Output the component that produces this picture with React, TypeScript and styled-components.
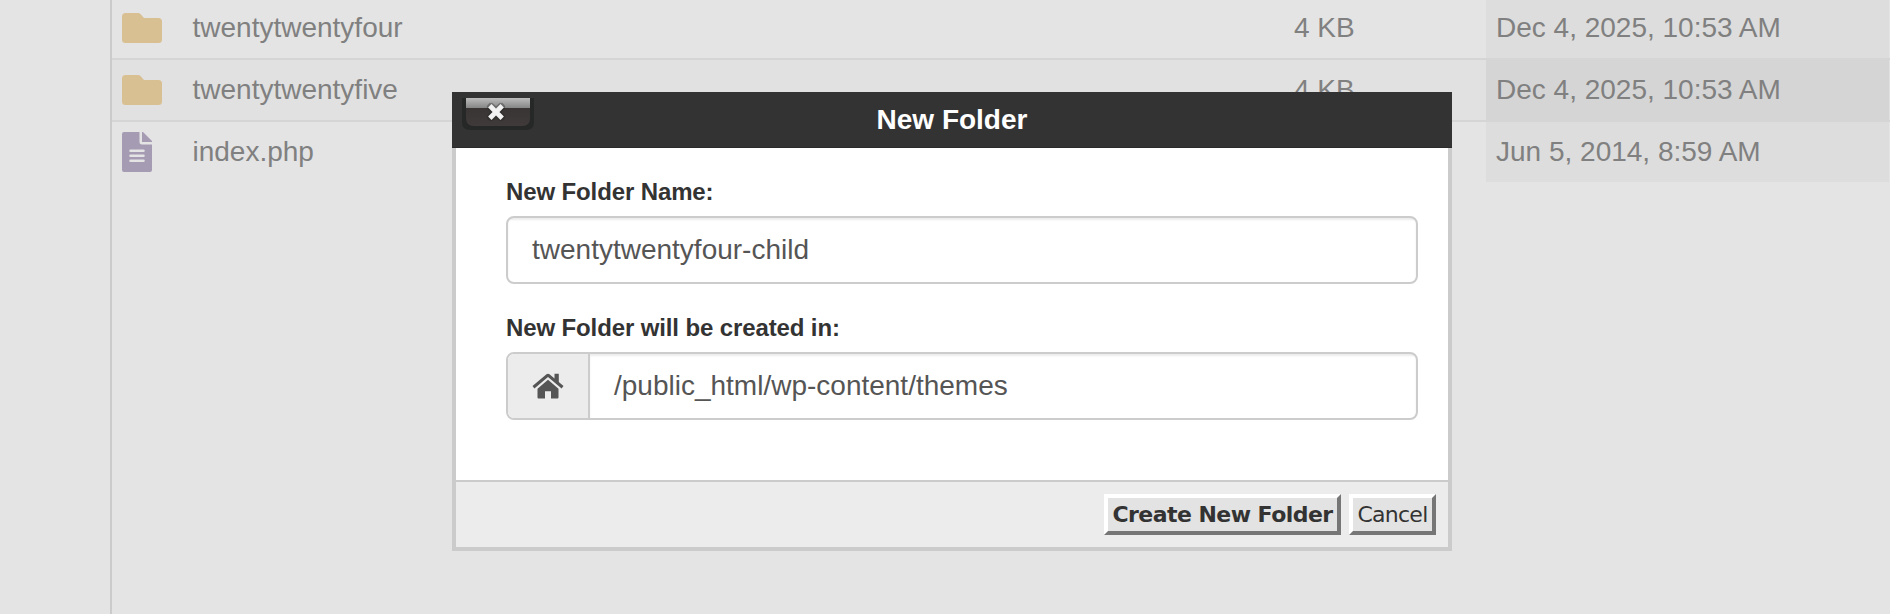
import React from "react";
import styled, { createGlobalStyle } from "styled-components";

const Global = createGlobalStyle`
  * { box-sizing: border-box; }
  body { margin: 0; background: #e4e4e4; overflow: hidden; font-family: "Liberation Sans", Arial, sans-serif; }
`;
const Page = styled.div`
  position: relative;
  display: flex;
  height: 614px;
  overflow: hidden;
`;
const Sidebar = styled.aside`
  width: 112px;
  flex: none;
  border-right: 2px solid #cbcbcb;
`;
const FileList = styled.main`
  flex: 1;
`;
const Row = styled.div<{ $alt?: boolean; $first?: boolean; $last?: boolean }>`
  display: grid;
  grid-template-columns: 80.5px 1101.5px 192px 403px;
  height: ${(p) => (p.$first ? 60 : p.$last ? 60 : 62)}px;
  border-bottom: ${(p) => (p.$last ? 0 : 2)}px solid #d5d5d5;
  background: ${(p) => (p.$alt ? "#e1e1e1" : "#e4e4e4")};
  font-size: 28px;
  line-height: 32px;
  color: #808080;
`;
const IconCell = styled.div<{ $top: number }>`
  padding: ${(p) => p.$top}px 0 0 10px;
  svg { display: block; }
`;
const Cell = styled.div<{ $top: number }>`
  padding-top: ${(p) => p.$top}px;
  white-space: nowrap;
`;
const DateCell = styled(Cell)<{ $alt?: boolean }>`
  padding-left: 10px;
  background: ${(p) => (p.$alt ? "#d5d5d5" : "#dddddd")};
`;

const Dialog = styled.section`
  position: absolute;
  left: 452px;
  top: 92px;
  width: 1000px;
  height: 459px;
  display: flex;
  flex-direction: column;
  background: #fff;
`;
const Header = styled.header`
  position: relative;
  height: 56px;
  flex: none;
  background: #333;
  border-bottom: 1px solid #2b2b2b;
  color: #fff;
  font-weight: bold;
  font-size: 28px;
  line-height: 56px;
  text-align: center;
`;
const CloseButton = styled.button`
  position: absolute;
  left: 10px;
  top: 6px;
  width: 72px;
  height: 32px;
  padding: 0;
  border: 0;
  background: none;
  svg { display: block; }
`;
const Body = styled.div`
  flex: 1;
  padding: 30px 30px 0 50px;
  border: solid #cbcbcb;
  border-width: 0 4px;
`;
const Label = styled.label`
  display: block;
  height: 38px;
  color: #333;
  font-weight: bold;
  font-size: 24px;
  line-height: 28px;
  letter-spacing: -0.12px;
  white-space: nowrap;
`;
const Field = styled.div`
  display: flex;
  height: 68px;
  margin-bottom: 30px;
  border: 2px solid #ccc;
  border-radius: 8px;
  overflow: hidden;
`;
const Addon = styled.span`
  display: flex;
  align-items: center;
  justify-content: center;
  width: 82px;
  flex: none;
  background: #ececec;
  border-right: 2px solid #ccc;
`;
const Value = styled.div`
  flex: 1;
  padding-left: 24px;
  box-shadow: inset 0 2px 2px rgba(0, 0, 0, 0.075);
  font-size: 28px;
  line-height: 64px;
  color: #555;
`;
const Footer = styled.footer`
  display: flex;
  justify-content: flex-end;
  gap: 8px;
  height: 71px;
  padding: 12px 12px 0 0;
  border: 4px solid #cbcbcb;
  border-top-width: 2px;
  background: #ececec;
`;
const Button = styled.button<{ $w: number; $bold?: boolean }>`
  width: ${(p) => p.$w}px;
  height: 41px;
  padding: 1px 0 0;
  border: 4px solid;
  border-color: #fff #767676 #767676 #fff;
  background: #e3e3e3;
  color: #333;
  font-family: "DejaVu Sans", Verdana, sans-serif;
  font-size: 22px;
  font-weight: ${(p) => (p.$bold ? "bold" : "normal")};
  line-height: 32px;
  letter-spacing: ${(p) => (p.$bold ? -0.55 : -0.75)}px;
  white-space: nowrap;
`;

const FolderIcon = () => (
  <svg width="40" height="30" viewBox="0 0 40 30">
    <path fill="#d9c093" d="M3.500 0h12.700q1.300 0 2.300 1l3.500 4H36.500Q40 5 40 8.500V26.500Q40 30 36.500 30H3.500Q0 30 0 26.500V3.500Q0 0 3.500 0Z" />
  </svg>
);
const FileIcon = () => (
  <svg width="30" height="40" viewBox="0 0 30 40">
    <path fill="#a59bb3" d="M2 0h15.500v10q0 2.500 2.500 2.500H30V38q0 2-2 2H2q-2 0-2-2V2Q0 0 2 0Z" />
    <path fill="#a59bb3" d="M20 0h1L30 9v1H20Z" />
    <path stroke="#e4e4e4" strokeWidth="2.500" strokeLinecap="round" d="M8.500 18.700h13M8.500 23.700h13M8.500 28.700h13" />
  </svg>
);
const HomeIcon = () => (
  <svg width="32" height="26" viewBox="0 0 32 26">
    <path fill="#555" d="M16 6.800 26.500 15.700V24.500q0 1-1 1H19v-7.300h-6v7.300H6.500q-1 0-1-1v-8.800Z" />
    <path fill="#555" d="M22.500.8h4.300v8.300l4.700 4-1.900 2.400L16 4.100 2.400 15.500.5 13.100 14.500 1.200Q16 .1 17.500 1.200L22.500 5.400Z" />
  </svg>
);
const CloseIcon = () => (
  <svg width="72" height="32" viewBox="0 0 72 32">
    <defs>
      <linearGradient id="gloss" x1="0" y1="0" x2="0" y2="1">
        <stop offset="0" stopColor="#bcbcbc" />
        <stop offset="1" stopColor="#858585" />
      </linearGradient>
      <linearGradient id="base" x1="0" y1="0" x2="0" y2="1">
        <stop offset="0" stopColor="#333130" />
        <stop offset="1" stopColor="#403b3a" />
      </linearGradient>
    </defs>
    <path fill="#262727" d="M0 0h72v24q0 8-8 8H8q-8 0-8-8Z" />
    <path fill="url(#base)" d="M4 0h64v20q0 8-8 8H12q-8 0-8-8Z" />
    <path fill="url(#gloss)" d="M4 0h64v10H4Z" />
    <path stroke="#222" strokeOpacity=".35" strokeWidth="8" strokeLinecap="round" d="m29 9 10 10M39 9 29 19" />
    <path stroke="#f2f2f2" strokeWidth="4.800" strokeLinecap="square" d="m29.500 9.500 9 9M38.500 9.500l-9 9" />
  </svg>
);

export default function App() {
  return (
    <Page>
      <Global />
      <Sidebar />
      <FileList>
        <Row $first>
          <IconCell $top={13}><FolderIcon /></IconCell>
          <Cell $top={12}>twentytwentyfour</Cell>
          <Cell $top={12}>4 KB</Cell>
          <DateCell $top={12}>Dec 4, 2025, 10:53 AM</DateCell>
        </Row>
        <Row $alt>
          <IconCell $top={15}><FolderIcon /></IconCell>
          <Cell $top={14}>twentytwentyfive</Cell>
          <Cell $top={14}>4 KB</Cell>
          <DateCell $top={14} $alt>Dec 4, 2025, 10:53 AM</DateCell>
        </Row>
        <Row $last>
          <IconCell $top={10}><FileIcon /></IconCell>
          <Cell $top={14}>index.php</Cell>
          <Cell $top={14} />
          <DateCell $top={14}>Jun 5, 2014, 8:59 AM</DateCell>
        </Row>
      </FileList>
      <Dialog>
        <Header>
          <CloseButton aria-label="Close"><CloseIcon /></CloseButton>
          New Folder
        </Header>
        <Body>
          <Label>New Folder Name:</Label>
          <Field><Value>twentytwentyfour-child</Value></Field>
          <Label>New Folder will be created in:</Label>
          <Field>
            <Addon><HomeIcon /></Addon>
            <Value>/public_html/wp-content/themes</Value>
          </Field>
        </Body>
        <Footer>
          <Button $w={237} $bold>Create New Folder</Button>
          <Button $w={87}>Cancel</Button>
        </Footer>
      </Dialog>
    </Page>
  );
}
